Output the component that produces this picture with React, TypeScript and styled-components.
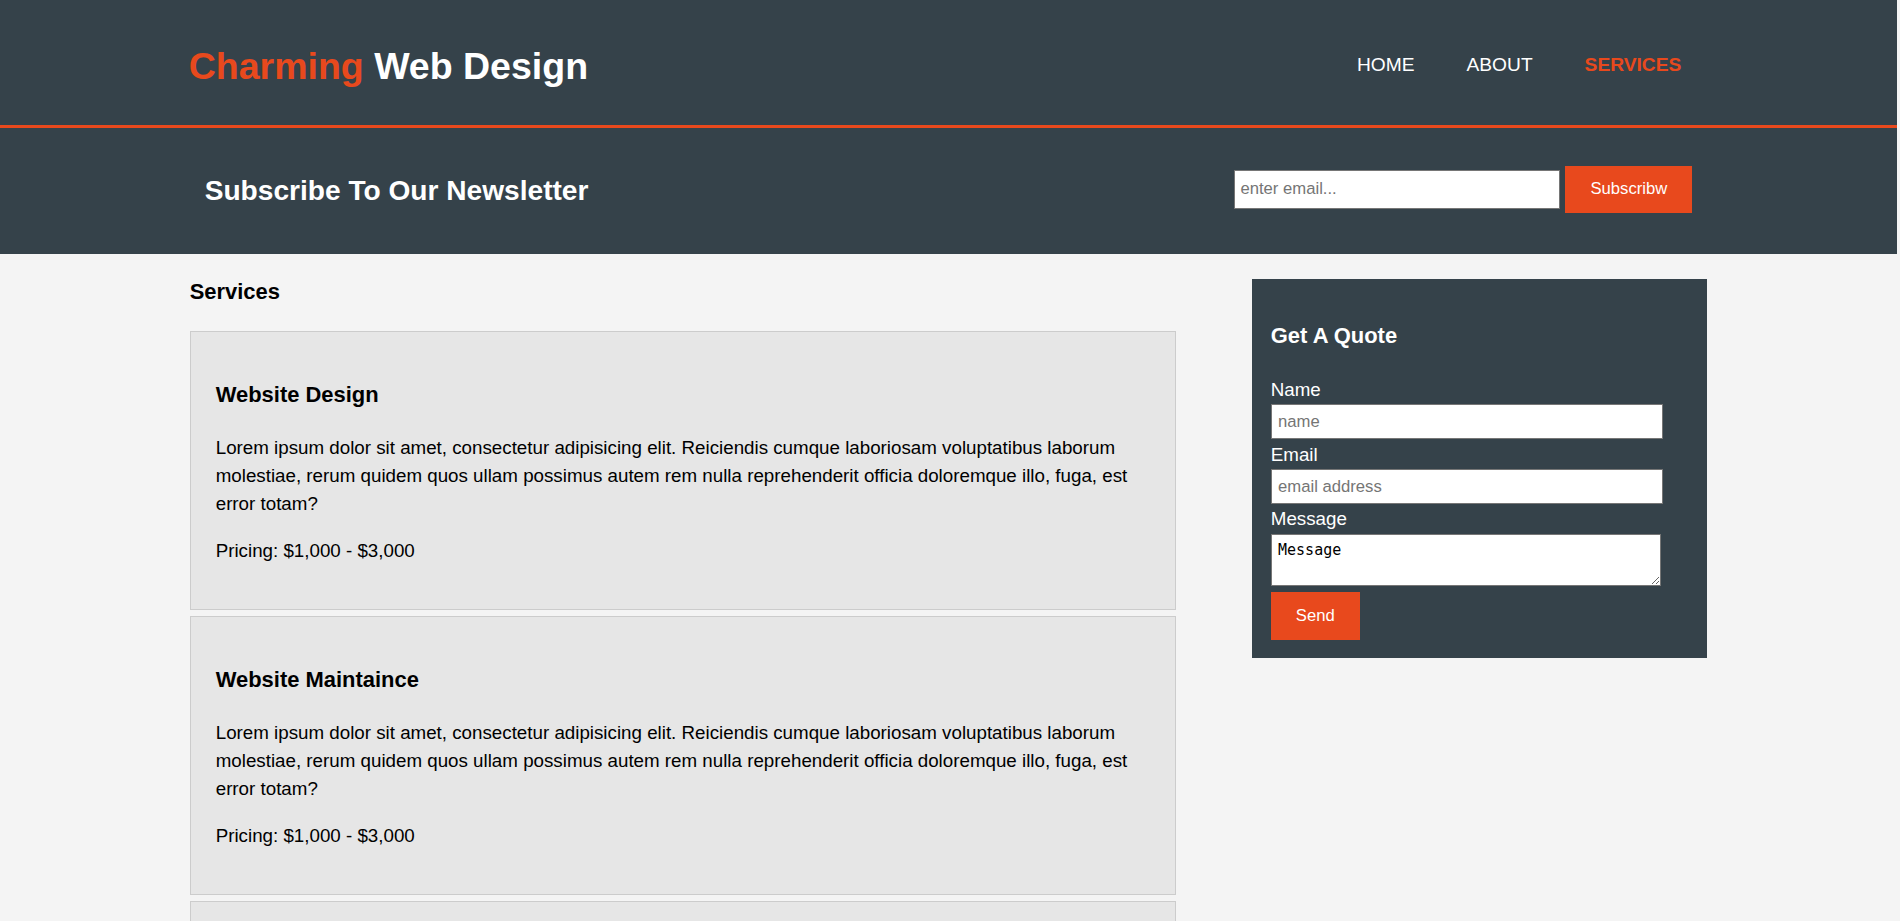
import React from "react";
import styled, { createGlobalStyle } from "styled-components";

const ORANGE = "#e8491d";
const DARK = "#35424a";
const SANS = `"Liberation Sans", Arial, Helvetica, sans-serif`;

const GlobalStyle = createGlobalStyle`
  html {
    background: #f4f4f4;
  }
  html::-webkit-scrollbar {
    width: 3px;
  }
  html::-webkit-scrollbar-track {
    background: #f1f1f1;
  }
  html::-webkit-scrollbar-thumb {
    background: #a8a8a8;
    border-left: 1px solid #f1f1f1;
    border-right: 1px solid #f1f1f1;
    background-clip: padding-box;
  }
  body {
    margin: 0 3px 0 0;
    padding: 0;
    background: #f4f4f4;
    font-family: ${SANS};
    font-size: 18.75px;
    line-height: 28.125px;
    color: #000;
  }
`;

const Container = styled.div`
  width: 80%;
  margin: 0 auto;
`;

/* Header */
const Header = styled.header`
  background: ${DARK};
  color: #fff;
  padding-top: 37.5px;
  min-height: 87.5px;
  border-bottom: 3px solid ${ORANGE};
`;

const HeaderInner = styled(Container)`
  display: flex;
  justify-content: space-between;
  align-items: flex-start;
`;

const Brand = styled.h1`
  margin: 0 0 0 -1px;
  font-size: 37.5px;
  line-height: 56.25px;
  font-weight: bold;
`;

const Highlight = styled.span`
  color: ${ORANGE};
`;

const Nav = styled.nav`
  margin-top: 12.5px;
`;

const NavList = styled.ul`
  display: flex;
  margin: 0;
  padding: 0;
  list-style: none;
`;

const NavItem = styled.li`
  padding: 0 26px;
`;

const NavLink = styled.a<{ $current?: boolean }>`
  display: block;
  font-size: 19.2px;
  line-height: 30px;
  text-transform: uppercase;
  text-decoration: none;
  color: ${(p) => (p.$current ? ORANGE : "#fff")};
  font-weight: ${(p) => (p.$current ? "bold" : "normal")};
`;

/* Newsletter */
const Newsletter = styled.section`
  padding: 18.75px;
  background: ${DARK};
  color: #fff;
`;

const NewsletterInner = styled(Container)`
  display: flex;
  justify-content: space-between;
  align-items: flex-start;
`;

const NewsTitle = styled.h1`
  margin: 23.3px 0;
  font-size: 28.125px;
  line-height: 42.19px;
  font-weight: bold;
`;

const SubscribeForm = styled.form`
  margin-top: 18.75px;
  display: flex;
  align-items: center;
  gap: 5px;
`;

const EmailInput = styled.input`
  box-sizing: border-box;
  width: 326px;
  height: 39px;
  padding: 0 5px;
  border: 1px solid #767676;
  border-radius: 0;
  background: #fff;
  font: 16.67px ${SANS};
  color: #000;
  outline: none;
  &::placeholder {
    color: #757575;
  }
`;

const OrangeButton = styled.button`
  display: block;
  height: 47.5px;
  padding: 0 25px;
  border: 0;
  border-radius: 0;
  background: ${ORANGE};
  color: #fff;
  font: 16.67px ${SANS};
  cursor: pointer;
`;

/* Main */
const Main = styled(Container)`
  display: flex;
  justify-content: space-between;
  align-items: flex-start;
`;

const MainCol = styled.article`
  width: 65%;
`;

const PageTitle = styled.h1`
  font-size: 21.94px;
  line-height: 32.9px;
  margin: 21.94px 0;
  font-weight: bold;
`;

const ServiceList = styled.ul`
  margin: 0;
  padding: 0;
  list-style: none;
`;

const ServiceCard = styled.li`
  padding: 25px;
  border: 1px solid #ccc;
  margin-bottom: 6.25px;
  background: #e6e6e6;
`;

const CardTitle = styled.h3`
  font-size: 21.94px;
  line-height: 32.9px;
  margin: 21.94px 0;
  font-weight: bold;
`;

const CardText = styled.p`
  margin: 18.75px 0;
`;

/* Sidebar */
const Sidebar = styled.aside`
  width: 30%;
  margin-top: 12.5px;
`;

const DarkBox = styled.div`
  padding: 18.75px;
  margin: 12.5px 0;
  background: ${DARK};
  color: #fff;
`;

const QuoteForm = styled.form`
  padding-top: 1px;
`;

const Field = styled.div`
  margin-bottom: 1.2px;
`;

const FieldLabel = styled.label`
  display: block;
  line-height: 28.125px;
`;

const TextField = styled.input`
  display: block;
  box-sizing: border-box;
  width: calc(90% + 16px);
  height: 35.5px;
  padding: 0 6.25px;
  border: 1px solid #767676;
  border-radius: 0;
  background: #fff;
  font: 16.67px ${SANS};
  color: #000;
  outline: none;
  &::placeholder {
    color: #757575;
  }
`;

const MessageArea = styled.textarea`
  display: block;
  box-sizing: border-box;
  width: calc(90% + 14px);
  height: 52px;
  padding: 6.25px;
  margin: 0 0 6.5px;
  border: 1px solid #767676;
  border-radius: 0;
  background: #fff;
  font: 15px "DejaVu Sans Mono", "Liberation Mono", monospace;
  color: #000;
  outline: none;
`;

const Footer = styled.footer`
  padding: 25px;
  margin-top: 25px;
  color: #fff;
  background: ${ORANGE};
  text-align: center;
`;

const FooterText = styled.p`
  margin: 18.75px 0;
`;

const services = [
  { title: "Website Design", price: "Pricing: $1,000 - $3,000" },
  { title: "Website Maintaince", price: "Pricing: $1,000 - $3,000" },
  { title: "Website Hosting", price: "Pricing: $500 per month" },
];

const LOREM =
  "Lorem ipsum dolor sit amet, consectetur adipisicing elit. Reiciendis cumque laboriosam voluptatibus laborum molestiae, rerum quidem quos ullam possimus autem rem nulla reprehenderit officia doloremque illo, fuga, est error totam?";

export default function App() {
  return (
    <>
      <GlobalStyle />
      <Header>
        <HeaderInner>
          <Brand>
            <Highlight>Charming</Highlight> Web Design
          </Brand>
          <Nav>
            <NavList>
              <NavItem>
                <NavLink href="#">Home</NavLink>
              </NavItem>
              <NavItem>
                <NavLink href="#">About</NavLink>
              </NavItem>
              <NavItem>
                <NavLink href="#" $current>
                  Services
                </NavLink>
              </NavItem>
            </NavList>
          </Nav>
        </HeaderInner>
      </Header>

      <Newsletter>
        <NewsletterInner>
          <NewsTitle>Subscribe To Our Newsletter</NewsTitle>
          <SubscribeForm onSubmit={(e) => e.preventDefault()}>
            <EmailInput type="email" placeholder="enter email..." />
            <OrangeButton type="submit">Subscribw</OrangeButton>
          </SubscribeForm>
        </NewsletterInner>
      </Newsletter>

      <Main>
        <MainCol>
          <PageTitle>Services</PageTitle>
          <ServiceList>
            {services.map((s) => (
              <ServiceCard key={s.title}>
                <CardTitle>{s.title}</CardTitle>
                <CardText>{LOREM}</CardText>
                <CardText>{s.price}</CardText>
              </ServiceCard>
            ))}
          </ServiceList>
        </MainCol>

        <Sidebar>
          <DarkBox>
            <CardTitle>Get A Quote</CardTitle>
            <QuoteForm onSubmit={(e) => e.preventDefault()}>
              <Field>
                <FieldLabel>Name</FieldLabel>
                <TextField type="text" placeholder="name" />
              </Field>
              <Field>
                <FieldLabel>Email</FieldLabel>
                <TextField type="email" placeholder="email address" />
              </Field>
              <Field>
                <FieldLabel>Message</FieldLabel>
                <MessageArea defaultValue="Message" />
              </Field>
              <OrangeButton type="submit">Send</OrangeButton>
            </QuoteForm>
          </DarkBox>
        </Sidebar>
      </Main>

      <Footer>
        <FooterText>Charming Web Design, Copyright &copy; 2017</FooterText>
      </Footer>
    </>
  );
}
